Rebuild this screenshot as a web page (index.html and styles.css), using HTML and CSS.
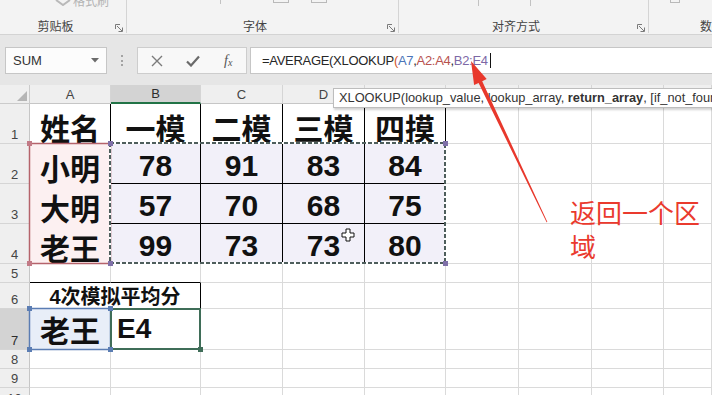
FILE: index.html
```html
<!DOCTYPE html>
<html lang="zh-CN">
<head>
  <meta charset="UTF-8">
  <meta name="viewport" content="width=device-width, initial-scale=1.0">
  <title>XLOOKUP 返回一个区域</title>
  <link rel="stylesheet" href="styles.css">
</head>
<body>
  <div class="ribbon">
    <div class="group g1">
      <div class="group-top">
        <svg class="brush" width="16" height="6" viewBox="0 0 16 6"><path d="M1 0 L8 5 L15 0" fill="none" stroke="#b9b9b9" stroke-width="2"/></svg>
        <span class="ghost">格式刷</span>
      </div>
      <div class="group-foot">
        <span class="group-label">剪贴板</span>
        <svg class="launcher" width="8" height="8" viewBox="0 0 8 8"><path d="M0.5 5V0.5H5 M2 2L7 7 M7.5 3.5V7.5H3.5" fill="none" stroke="#7a7a7a"/></svg>
      </div>
    </div>
    <div class="group g2">
      <div class="group-top">
        <span class="tick t-220"></span>
        <span class="nub n-273"></span>
        <span class="nub n-312"></span>
      </div>
      <div class="group-foot">
        <span class="group-label">字体</span>
        <svg class="launcher" width="8" height="8" viewBox="0 0 8 8"><path d="M0.5 5V0.5H5 M2 2L7 7 M7.5 3.5V7.5H3.5" fill="none" stroke="#7a7a7a"/></svg>
      </div>
    </div>
    <div class="group g3">
      <div class="group-top">
        <span class="tick t-478"></span>
        <span class="tick t-530"></span>
      </div>
      <div class="group-foot">
        <span class="group-label">对齐方式</span>
        <svg class="launcher" width="8" height="8" viewBox="0 0 8 8"><path d="M0.5 5V0.5H5 M2 2L7 7 M7.5 3.5V7.5H3.5" fill="none" stroke="#7a7a7a"/></svg>
      </div>
    </div>
    <div class="group g4">
      <div class="group-top">
        <span class="nub n-670"></span>
      </div>
      <div class="group-foot wide">
        <span class="group-label left">数据</span>
      </div>
    </div>
  </div>

  <div class="formula-row">
    <div class="name-box">
      <span>SUM</span>
      <svg width="8" height="5" viewBox="0 0 8 5"><path d="M0 0H8L4 4.5Z" fill="#6b6b6b"/></svg>
    </div>
    <div class="grip"><span></span></div>
    <div class="fx-box">
      <span class="fx-btn">
        <svg width="12" height="12" viewBox="0 0 12 12"><path d="M1 1L11 11M11 1L1 11" stroke="#7b7b7b" stroke-width="1.4"/></svg>
      </span>
      <span class="fx-btn">
        <svg width="14" height="12" viewBox="0 0 14 12"><path d="M1 6.5L5 10.5L13 1.5" fill="none" stroke="#6a6a6a" stroke-width="2.2"/></svg>
      </span>
      <span class="fx-btn fx-label"><i>f<sub>x</sub></i></span>
    </div>
    <div class="formula">
      <span>=AVERAGE(XLOOKUP</span><span class="p-paren">(</span><span class="p-blue">A7</span><span>,</span><span class="p-red">A2:A4</span><span>,</span><span class="p-purple">B2:E4</span><span class="caret"></span>
    </div>
  </div>

  <div class="sheet">
    <div class="corner"><svg width="10" height="10" viewBox="0 0 10 10"><path d="M10 0V10H0Z" fill="#b5b5b5"/></svg></div>
    <div class="ch">A</div><div class="ch sel">B</div><div class="ch">C</div><div class="ch">D</div><div class="ch">E</div><div class="ch">F</div><div class="ch">G</div><div class="ch">H</div><div class="ch">I</div>

    <div class="rh">1</div>
    <div class="c bk big">姓名</div><div class="c bk big">一模</div><div class="c bk big">二模</div><div class="c bk big">三模</div><div class="c bk big">四摸</div>
    <div class="c"></div><div class="c"></div><div class="c"></div><div class="c"></div>

    <div class="rh">2</div>
    <div class="c name big">小明</div><div class="c bk val">78</div><div class="c bk val">91</div><div class="c bk val">83</div><div class="c bk val">84</div>
    <div class="c"></div><div class="c"></div><div class="c"></div><div class="c"></div>

    <div class="rh">3</div>
    <div class="c name big">大明</div><div class="c bk val">57</div><div class="c bk val">70</div><div class="c bk val">68</div><div class="c bk val">75</div>
    <div class="c"></div><div class="c"></div><div class="c"></div><div class="c"></div>

    <div class="rh">4</div>
    <div class="c name big">老王</div><div class="c bk val">99</div><div class="c bk val">73</div><div class="c bk val">73</div><div class="c bk val">80</div>
    <div class="c"></div><div class="c"></div><div class="c"></div><div class="c"></div>

    <div class="rh">5</div>
    <div class="c bk-b"></div><div class="c bk-b"></div>
    <div class="c"></div><div class="c"></div><div class="c"></div><div class="c"></div><div class="c"></div><div class="c"></div><div class="c"></div>

    <div class="rh">6</div>
    <div class="c bk merged">4次模拟平均分</div>
    <div class="c"></div><div class="c"></div><div class="c"></div><div class="c"></div><div class="c"></div><div class="c"></div><div class="c"></div>

    <div class="rh sel">7</div>
    <div class="c lookup big mid">老王</div><div class="c editing">E4</div>
    <div class="c"></div><div class="c"></div><div class="c"></div><div class="c"></div><div class="c"></div><div class="c"></div><div class="c"></div>

    <div class="rh">8</div>
    <div class="c"></div><div class="c"></div><div class="c"></div><div class="c"></div><div class="c"></div><div class="c"></div><div class="c"></div><div class="c"></div><div class="c"></div>

    <div class="rh">9</div>
    <div class="c"></div><div class="c"></div><div class="c"></div><div class="c"></div><div class="c"></div><div class="c"></div><div class="c"></div><div class="c"></div><div class="c"></div>

    <div class="rh">10</div>
    <div class="c"></div><div class="c"></div><div class="c"></div><div class="c"></div><div class="c"></div><div class="c"></div><div class="c"></div><div class="c"></div><div class="c"></div>
  </div>

  <div class="tooltip">XLOOKUP(lookup_value, lookup_array, <b>return_array</b>, [if_not_found], [match_mode])</div>

  <!-- range highlights, cursor and the annotation arrow sit over the grid -->
  <svg class="overlay" width="712" height="395" viewBox="0 0 712 395">
    <rect x="29.5" y="143.5" width="81" height="120" fill="none" stroke="#b5636b" stroke-width="1.5"/>
    <rect x="27" y="141" width="5" height="5" fill="#c27a86"/>
    <rect x="27" y="261" width="5" height="5" fill="#c27a86"/>

    <rect x="110" y="143" width="335" height="120" fill="none" stroke="#fff" stroke-width="2"/>
    <rect x="110" y="143" width="335" height="120" fill="none" stroke="#4e5e5c" stroke-width="2" stroke-dasharray="4 2"/>
    <rect x="108" y="141" width="5" height="5" fill="#7f70a8"/>
    <rect x="443" y="141" width="5" height="5" fill="#7f70a8"/>
    <rect x="108" y="261" width="5" height="5" fill="#7f70a8"/>
    <rect x="443" y="261" width="5" height="5" fill="#7f70a8"/>

    <rect x="29.5" y="308.5" width="81" height="41" fill="none" stroke="#5b7db3" stroke-width="1.5"/>
    <rect x="111" y="309" width="89" height="40" fill="none" stroke="#3f6d58" stroke-width="2"/>
    <rect x="27" y="306" width="5" height="5" fill="#5b7db3"/>
    <rect x="108" y="306" width="5" height="5" fill="#5b7db3"/>
    <rect x="27" y="347" width="5" height="5" fill="#5b7db3"/>
    <rect x="108" y="347" width="5" height="5" fill="#5b7db3"/>
    <rect x="198" y="347" width="5" height="5" fill="#3f6d58"/>

    <path d="M342 233H346V229H350V233H354V237H350V241H346V237H342Z" fill="#fff" stroke="#111" stroke-width="1"/>

    <polygon points="471,61 486.7,78.9 482.2,81.3 547.4,222 546.6,222.3 478.6,83 474.1,84.9" fill="#e8382c"/>
  </svg>

  <div class="note">返回一个区域</div>
</body>
</html>
```

FILE: styles.css
```css
* {
  box-sizing: border-box;
}

body {
  margin: 0;
  width: 712px;
  height: 395px;
  overflow: hidden;
  position: relative;
  background-color: #e6e6e6;
  font-family: 'Liberation Sans', 'Noto Sans CJK SC', sans-serif;
  color: #222;
}

/* ribbon strip (cut off at the top) */
.ribbon {
  display: flex;
  height: 35px;
  background-color: #f3f3f3;
  border-bottom: 1px solid #d3d3d3;
  overflow: hidden;
}

.group {
  flex-shrink: 0;
  display: flex;
  flex-direction: column;
  height: 33px;
  border-right: 1px solid #d4d4d4;
}
.g1 { width: 127px; }
.g2 { width: 272px; }
.g3 { width: 250px; }
.g4 {
  flex: 1 1 0;
  min-width: 0;
  overflow: hidden;
  border-right: none;
}

.group-top {
  flex: 1;
  display: flex;
  align-items: flex-start;
}

.group-foot {
  height: 14px;
  display: grid;
  grid-template-columns: 1fr 12px;
  align-items: center;
  padding-right: 3px;
}
.group-foot.wide {
  display: block;
  padding-right: 0;
}

.group-label {
  text-align: center;
  font-family: 'Noto Sans CJK SC', sans-serif;
  font-size: 12px;
  line-height: 14px;
  color: #444;
}
.group-label.left {
  display: block;
  text-align: left;
  padding-left: 51px;
  white-space: nowrap;
}

.launcher {
  justify-self: end;
  margin-top: 3px;
}

.brush {
  margin-left: 55px;
}
.ghost {
  margin-top: -8px;
  margin-left: 2px;
  font-family: 'Noto Sans CJK SC', sans-serif;
  font-size: 12px;
  color: #b3b3b3;
}

.tick {
  width: 1px;
  height: 6px;
  background-color: #c2c2c2;
}
.t-220 { margin-left: 93px; height: 4px; }
.t-478 { margin-left: 79px; }
.t-530 { margin-left: 51px; }

.nub {
  width: 16px;
  height: 3px;
  border: 1px solid #b9b9b9;
  border-top: none;
}
.n-273 { margin-left: 52px; }
.n-312 { margin-left: 22px; }
.n-670 { margin-left: 21px; width: 10px; }

/* formula bar */
.formula-row {
  display: flex;
  height: 50px;
  padding: 12px 0 11px 5px;
}

.name-box {
  width: 102px;
  display: flex;
  align-items: center;
  justify-content: space-between;
  padding: 0 7px;
  background-color: #fcfcfc;
  border: 1px solid #c6c6c6;
  font-size: 13px;
  color: #333;
}

.grip {
  width: 30px;
  display: flex;
  align-items: center;
  justify-content: center;
}
.grip span {
  height: 11px;
  border-left: 2px dotted #a3a3a3;
}

.fx-box {
  width: 110px;
  display: flex;
  padding-left: 1px;
  background-color: #f8f8f8;
  border: 1px solid #cdcdcd;
}

.fx-btn {
  width: 36px;
  display: flex;
  align-items: center;
  justify-content: center;
}

.fx-label i {
  font-family: 'Liberation Serif', serif;
  font-size: 14px;
  color: #555;
}
.fx-label sub {
  font-size: 10px;
  vertical-align: -1px;
}

.formula {
  flex: 1;
  display: flex;
  align-items: center;
  margin: 0 -2px 0 3px;
  padding-left: 11px;
  background-color: #fff;
  border: 1px solid #c6c6c6;
  font-size: 13px;
  letter-spacing: -0.3px;
  white-space: nowrap;
  color: #262626;
}
.p-paren { color: #d2562a; }
.p-blue { color: #4a74b8; }
.p-red { color: #b8524f; }
.p-purple { color: #7d68a6; }
.caret {
  width: 1px;
  height: 15px;
  margin-left: 2px;
  background-color: #111;
}

/* worksheet grid */
.sheet {
  display: grid;
  grid-template-columns: 30px 81px 90px 82px 82px 81px 73px 73px 72px 1fr;
  grid-template-rows: 19px 40px 40px 40px 40px 19px 26px 41px 19px 19px 20px;
  background-color: #fff;
}

.corner,
.ch,
.rh {
  background-color: #efefef;
  color: #444;
  font-size: 13px;
}

.corner {
  display: flex;
  align-items: flex-end;
  justify-content: flex-end;
  padding: 0 2px 2px 0;
  border-right: 1px solid #cbcbcb;
  border-bottom: 1px solid #cbcbcb;
}

.ch {
  display: flex;
  align-items: center;
  justify-content: center;
  border-right: 1px solid #d5d5d5;
  border-bottom: 1px solid #c6c6c6;
}
.ch.sel {
  background-color: #d3d3d3;
  border-bottom: 2px solid #217346;
  color: #2d2d2d;
}

.rh {
  display: flex;
  align-items: flex-end;
  justify-content: center;
  padding-bottom: 1px;
  line-height: 14px;
  border-right: 1px solid #c6c6c6;
  border-bottom: 1px solid #d5d5d5;
}
.rh.sel {
  background-color: #d3d3d3;
  color: #2d2d2d;
}

.c {
  display: flex;
  align-items: flex-end;
  justify-content: center;
  border-right: 1px solid #dadada;
  border-bottom: 1px solid #dadada;
  white-space: nowrap;
  color: #111;
}

.bk {
  border-right-color: #000;
  border-bottom-color: #000;
}
.bk-b {
  border-bottom-color: #000;
}

.big {
  font-family: 'Noto Sans CJK SC', sans-serif;
  font-weight: bold;
  font-size: 30px;
  line-height: 30px;
  padding-bottom: 1px;
}

.val {
  font-weight: bold;
  font-size: 30px;
  line-height: 30px;
  padding-bottom: 2px;
  background-color: #f2f0f9;
}

.name {
  background-color: #fcf0f1;
  border-bottom-color: #fcf0f1;
}

.merged {
  grid-column: span 2;
  align-items: center;
  font-weight: bold;
  font-size: 20px;
}

.lookup {
  background-color: #e8eef8;
}
.mid {
  align-items: center;
}

.editing {
  justify-content: flex-start;
  align-items: center;
  padding-left: 6px;
  font-weight: bold;
  font-size: 28px;
}

/* things drawn on top */
.overlay {
  position: absolute;
  top: 0;
  left: 0;
  pointer-events: none;
}

.tooltip {
  position: absolute;
  top: 88px;
  left: 333px;
  width: 420px;
  height: 20px;
  padding-left: 5px;
  line-height: 18px;
  background-color: #fff;
  border: 1px solid #bdbdbd;
  box-shadow: 1px 2px 2px rgba(0, 0, 0, 0.18);
  font-size: 12.8px;
  color: #333;
  white-space: nowrap;
}

.note {
  position: absolute;
  top: 195px;
  left: 570px;
  width: 134px;
  font-family: 'Noto Sans CJK SC', sans-serif;
  font-size: 26px;
  line-height: 34px;
  color: #ea3a2e;
}
```
